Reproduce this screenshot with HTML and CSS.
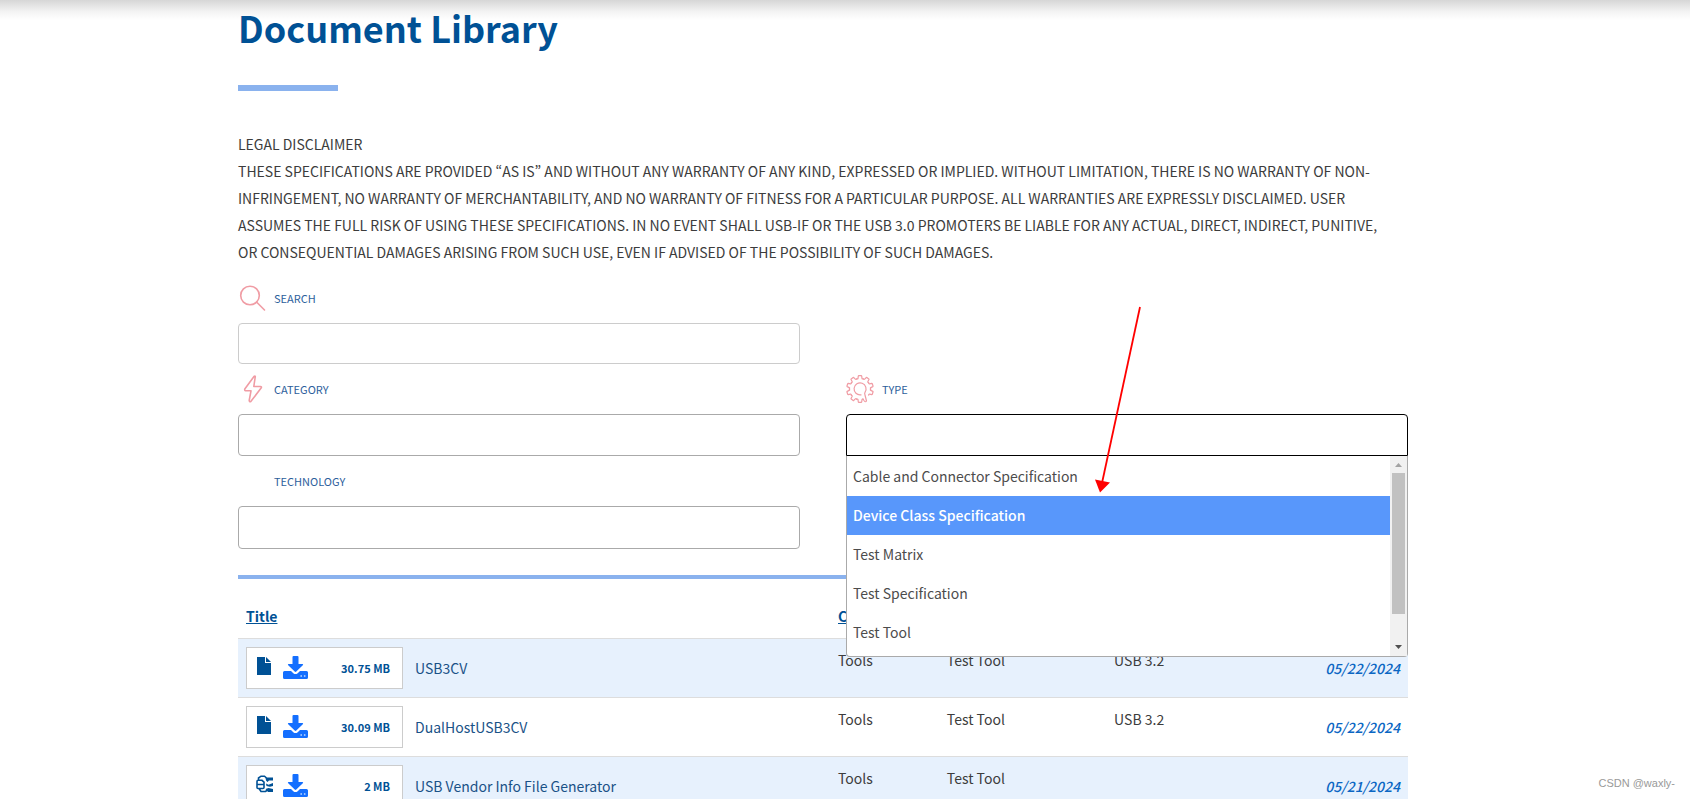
FILE: index.html
```html
<!DOCTYPE html>
<html lang="en">
<head>
<meta charset="utf-8">
<title>Document Library</title>
<link rel="stylesheet" href="styles.css">
</head>
<body>
<svg class="defs" width="0" height="0" aria-hidden="true">
  <symbol id="file" viewBox="0 0 14 18"><path d="M0 0H8V6H14V18H0Z"/><path d="M9 0L14 5H9Z"/></symbol>
  <symbol id="zip" viewBox="0 0 17 18">
    <path d="M2.500 5V3L5 1.200H8.500L10.500 3M1 6.500Q1 5.300 2 5.300H6L8 7.200V12.500Q8 13.500 7 13.500H2Q1 13.500 1 12.500ZM1 9.500H8M3 13.500L5 16.500H9.500L11.500 15" fill="none" stroke="#005195" stroke-width="1.600"/>
    <path d="M9.500 2.500H17V5.500H13L11.500 7L10 5.500ZM10 8.500L12.500 9.800L17 8V11L14 11.800L10.500 11ZM9.500 14L12.500 13L17 14V17H12Z"/>
  </symbol>
  <symbol id="download" viewBox="0 0 25 23">
    <path d="M9.500 1Q9.500 0 10.500 0H14.500Q15.500 0 15.500 1V8H19.300Q20.800 8 19.800 9.200L13.300 15.600Q12.500 16.300 11.700 15.600L5.200 9.200Q4.200 8 5.700 8H9.500Z"/>
    <path d="M1.500 15H8L10.300 17.200Q12.500 19 14.700 17.200L17 15H23.500Q25 15 25 16.500V21.500Q25 23 23.500 23H1.500Q0 23 0 21.500V16.500Q0 15 1.500 15Z"/>
    <circle class="led" cx="18.200" cy="20" r="0.900"/><circle class="led" cx="21.700" cy="20" r="0.900"/>
  </symbol>
</svg>
<div class="page">
  <div class="top-shadow"></div>
  <main class="container">
    <h1 class="title">Document Library</h1>
    <div class="title-bar"></div>
    <p class="legal">LEGAL DISCLAIMER<br>THESE SPECIFICATIONS ARE PROVIDED “AS IS” AND WITHOUT ANY WARRANTY OF ANY KIND, EXPRESSED OR IMPLIED. WITHOUT LIMITATION, THERE IS NO WARRANTY OF NON-INFRINGEMENT, NO WARRANTY OF MERCHANTABILITY, AND NO WARRANTY OF FITNESS FOR A PARTICULAR PURPOSE. ALL WARRANTIES ARE EXPRESSLY DISCLAIMED. USER ASSUMES THE FULL RISK OF USING THESE SPECIFICATIONS. IN NO EVENT SHALL USB-IF OR THE USB 3.0 PROMOTERS BE LIABLE FOR ANY ACTUAL, DIRECT, INDIRECT, PUNITIVE,<br>OR CONSEQUENTIAL DAMAGES ARISING FROM SUCH USE, EVEN IF ADVISED OF THE POSSIBILITY OF SUCH DAMAGES.</p>

    <form class="filters">
      <div class="field search">
        <label class="label" for="search">
          <svg class="icon" viewBox="0 0 28 28"><circle cx="12" cy="11.500" r="9.300"/><path d="M18.500 18L26.500 26"/></svg>SEARCH
        </label>
        <input class="input light" id="search" type="text">
      </div>
      <div class="field">
        <label class="label" for="category">
          <svg class="icon" viewBox="0 0 28 28"><path d="M17.300 1.500Q17 0.800 16 1.500L6.800 14Q6.400 15.500 7.500 15.800H13L11.200 25.500Q11.300 27.300 12.800 26.500L23.300 12.800Q23.800 11.500 22.500 11.500H15.800Z"/></svg>CATEGORY
        </label>
        <input class="input" id="category" type="text">
      </div>
      <div class="field">
        <label class="label" for="type">
          <svg class="icon gear" viewBox="-14 -14 28 28">
            <g>
              <path id="tooth" d="M-3.200 -10.200Q-2.200 -9.700 -2 -10.700L-1.700 -12.900Q-1.600 -13.300 -1.200 -13.300H1.200Q1.600 -13.300 1.700 -12.900L2 -10.700Q2.200 -9.700 3.200 -10.200"/>
              <use href="#tooth" transform="rotate(36)"/><use href="#tooth" transform="rotate(72)"/><use href="#tooth" transform="rotate(108)"/>
              <use href="#tooth" transform="rotate(180)"/><use href="#tooth" transform="rotate(216)"/><use href="#tooth" transform="rotate(252)"/>
              <use href="#tooth" transform="rotate(288)"/><use href="#tooth" transform="rotate(324)"/>
            </g>
            <path d="M1 5.800A6 6 0 1 1 5 3.300Q4.300 4.500 5 6L6.500 12Q5.500 13.500 4.300 12L3 10"/>
          </svg>TYPE
        </label>
        <div class="combo">
          <input class="input open" id="type" type="text" role="combobox" aria-expanded="true" aria-controls="type-list">
          <div class="dropdown">
            <ul class="options" id="type-list" role="listbox" aria-label="Type">
              <li class="option" role="option">Cable and Connector Specification</li>
              <li class="option active" role="option" aria-selected="true">Device Class Specification</li>
              <li class="option" role="option">Test Matrix</li>
              <li class="option" role="option">Test Specification</li>
              <li class="option" role="option">Test Tool</li>
            </ul>
            <div class="scrollbar">
              <svg class="arrow up" viewBox="0 0 7 4"><path d="M0 4L3.500 0L7 4Z"/></svg>
              <div class="thumb"></div>
              <svg class="arrow down" viewBox="0 0 7 4"><path d="M0 0L3.500 4L7 0Z"/></svg>
            </div>
          </div>
        </div>
      </div>
      <div class="field">
        <label class="label" for="technology"><span class="icon"></span>TECHNOLOGY</label>
        <input class="input tall" id="technology" type="text">
      </div>
    </form>

    <table class="docs">
      <thead>
        <tr>
          <th class="c-title"><a href="#">Title</a></th>
          <th class="c-cat"><a href="#">Category</a></th>
          <th class="c-type"><a href="#">Type</a></th>
          <th class="c-tech"><a href="#">Technology</a></th>
          <th class="c-date"><a href="#">Date</a></th>
        </tr>
      </thead>
      <tbody>
        <tr>
          <td><div class="doc"><a class="box" href="#"><svg class="file"><use href="#file"/></svg><svg class="download"><use href="#download"/></svg><span class="size">30.75 MB</span></a><a class="name" href="#">USB3CV</a></div></td>
          <td>Tools</td><td>Test Tool</td><td>USB 3.2</td><td class="date">05/22/2024</td>
        </tr>
        <tr>
          <td><div class="doc"><a class="box" href="#"><svg class="file"><use href="#file"/></svg><svg class="download"><use href="#download"/></svg><span class="size">30.09 MB</span></a><a class="name" href="#">DualHostUSB3CV</a></div></td>
          <td>Tools</td><td>Test Tool</td><td>USB 3.2</td><td class="date">05/22/2024</td>
        </tr>
        <tr>
          <td><div class="doc"><a class="box" href="#"><svg class="file zip"><use href="#zip"/></svg><svg class="download"><use href="#download"/></svg><span class="size">2 MB</span></a><a class="name" href="#">USB Vendor Info File Generator</a></div></td>
          <td>Tools</td><td>Test Tool</td><td></td><td class="date">05/21/2024</td>
        </tr>
      </tbody>
    </table>
  </main>
  <svg class="pointer" viewBox="0 0 44 190"><path d="M42 2L4 178" fill="none" stroke="#f00" stroke-width="1.800"/><path d="M-3 174.500L12 177.500L2 187.500Z" fill="#f00"/></svg>
  <div class="watermark">CSDN @waxly-</div>
</div>
</body>
</html>
```
FILE: styles.css
```css
* { box-sizing: border-box; }
body {
  margin: 0;
  background: #fff;
  color: #3c3c3c;
  font: 400 14px/27px "Noto Sans CJK SC", "Open Sans", sans-serif;
}
.defs { position: absolute; }
.page {
  position: relative;
  height: 100vh;
  overflow: hidden;
  padding-right: 44px;
}
.top-shadow {
  position: absolute;
  top: 0;
  left: 0;
  right: 0;
  height: 20px;
  background: linear-gradient(#d6d6d6, #f4f4f4 60%, rgba(255, 255, 255, 0));
}
.container {
  position: relative;
  max-width: 1170px;
  margin: 0 auto;
  padding-top: 5px;
}
.title {
  margin: 0;
  color: #005195;
  font-size: 36px;
  font-weight: 700;
  line-height: 44px;
}
.title-bar {
  width: 100px;
  height: 6px;
  margin: 36px 0 40px;
  background: #8ab2ee;
}
.legal { margin: 0; font-variant-east-asian: proportional-width; }

.filters {
  display: grid;
  grid-template-columns: 1fr 1fr;
  column-gap: 46px;
}
.search { grid-column: 1; padding-top: 7px; }
.search + .field { grid-column: 1; }
.label {
  display: flex;
  align-items: center;
  gap: 8px;
  height: 50px;
  color: #2d609c;
  font-size: 11px;
  line-height: 16px;
}
.icon {
  width: 28px;
  height: 28px;
  fill: none;
  stroke: #f09ca4;
  stroke-width: 1.6;
  stroke-linecap: round;
  stroke-linejoin: round;
}
.gear { stroke-width: 1.2; }
.input {
  display: block;
  width: 100%;
  height: 42px;
  padding: 0 8px;
  border: 1px solid #aaa;
  border-radius: 4px;
  background: #fff;
  font: inherit;
  outline: none;
}
.input.light { height: 41px; border-color: #ccc; }
.input.tall { height: 43px; }
.input.open { border-color: #000; border-radius: 4px 4px 0 0; }
.combo { position: relative; }
.dropdown {
  position: absolute;
  z-index: 2;
  top: 100%;
  left: 0;
  right: 0;
  display: flex;
  height: 201px;
  border: 1px solid #aaa;
  border-top: 0;
  border-radius: 0 0 4px 4px;
  background: #fff;
}
.options {
  flex: 1;
  margin: 0;
  padding: 1px 0 0;
  list-style: none;
}
.option {
  height: 39px;
  padding: 6px;
  color: #4c4c4c;
}
.option.active { background: #5897fb; color: #fff; font-weight: 500; }
.scrollbar {
  display: flex;
  flex-direction: column;
  align-items: center;
  width: 17px;
  padding: 7px 2px;
  background: #f1f1f1;
}
.thumb { width: 13px; height: 141px; margin-top: 6px; background: #c1c1c1; }
.arrow { width: 7px; height: 4px; }
.up { fill: #a3a3a3; }
.down { margin-top: auto; fill: #505050; }

.docs {
  width: 100%;
  margin-top: 26px;
  border-top: 4px solid #8ab2ee;
  border-spacing: 0;
  table-layout: fixed;
}
.docs th { padding: 24px 8px 8px; text-align: left; font-weight: 700; }
.docs a { color: #005195; }
.docs .c-title { width: 50.6%; }
.docs .c-cat { width: 9.3%; }
.docs .c-type { width: 14.3%; }
.docs .c-date { width: 10%; text-align: right; }
.docs td { padding: 8px; border-top: 1px solid #ddd; vertical-align: top; }
.docs tbody tr:nth-child(odd) { background: #e7f1fd; }
.doc { display: flex; align-items: center; gap: 12px; }
.box {
  display: flex;
  align-items: center;
  gap: 12px;
  width: 157px;
  height: 42px;
  padding: 0 12px 0 10px;
  border: 1px solid #ccc;
  background: #fff;
  text-decoration: none;
}
.file { width: 14px; height: 18px; margin-bottom: 4px; fill: #005195; }
.file.zip { width: 17px; margin: 0 -2px 4px -1px; }
.download { width: 25px; height: 23px; margin-bottom: 1px; fill: #146fff; }
.led { fill: #a8caff; }
.size { margin-left: auto; font-size: 11px; font-weight: 700; }
.docs .name { color: #1a5287; text-decoration: none; }
.docs .date {
  vertical-align: middle;
  color: #0b66c3;
  font-style: italic;
  font-weight: 500;
  text-align: right;
}
.pointer { position: absolute; z-index: 3; top: 305px; left: 1098px; width: 44px; height: 190px; overflow: visible; }
.watermark {
  position: absolute;
  right: 15px;
  bottom: 8px;
  color: #999;
  font: 11px/16px "Liberation Sans", Arial, sans-serif;
}
```
